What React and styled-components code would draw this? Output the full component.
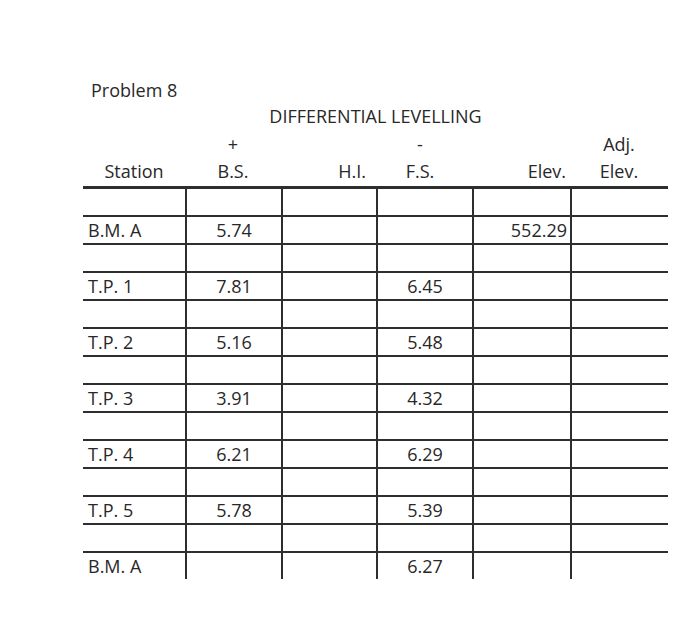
import React from 'react'
import styled, { createGlobalStyle } from 'styled-components'

const GlobalStyle = createGlobalStyle`
    html, body {
        margin: 0;
        padding: 0;
        background: #ffffff;
    }
    body {
        font-family: "Open Sans", "Liberation Sans", sans-serif;
        color: #282828;
    }
`

const COLS = '102px 96px 95px 96px 98px 98px'
const LINE = '#2e2e2e'

const headers = [
    { top: '', bottom: 'Station', align: 'center' },
    { top: '+', bottom: 'B.S.', align: 'center' },
    { top: '', bottom: 'H.I.', align: 'flex-end', pad: '0 10px 0 0' },
    { top: '-', bottom: 'F.S.', align: 'center', pad: '0 8px 0 0' },
    { top: '', bottom: 'Elev.', align: 'flex-end', pad: '0 4px 0 0' },
    { top: 'Adj.', bottom: 'Elev.', align: 'center' },
]

const data = [
    ['B.M. A', '5.74', '', '', '552.29', ''],
    ['T.P. 1', '7.81', '', '6.45', '', ''],
    ['T.P. 2', '5.16', '', '5.48', '', ''],
    ['T.P. 3', '3.91', '', '4.32', '', ''],
    ['T.P. 4', '6.21', '', '6.29', '', ''],
    ['T.P. 5', '5.78', '', '5.39', '', ''],
    ['B.M. A', '', '', '6.27', '', ''],
]

function App() {
    const rows = []
    data.forEach((r, i) => {
        rows.push({ key: 'b' + i, cells: ['', '', '', '', '', ''], first: i === 0 })
        rows.push({ key: 'd' + i, cells: r, first: false })
    })

    return (
        <Page>
            <GlobalStyle />
            <Title>Problem 8</Title>
            <Sheet>
                <Heading>DIFFERENTIAL LEVELLING</Heading>
                <HeaderRow>
                    {headers.map((h, i) => (
                        <HeaderCell key={i} $align={h.align} $pad={h.pad}>
                            <HeadTop>{h.top}</HeadTop>
                            <HeadBottom>{h.bottom}</HeadBottom>
                        </HeaderCell>
                    ))}
                </HeaderRow>
                <Body>
                    {rows.map((row) => (
                        <Row key={row.key} $first={row.first}>
                            {row.cells.map((c, j) => (
                                <Cell key={j} $col={j}>{c}</Cell>
                            ))}
                        </Row>
                    ))}
                </Body>
            </Sheet>
        </Page>
    )
}

export default App

const Page = styled.div`
    width: 692px;
    height: 636px;
    box-sizing: border-box;
    padding: 79px 0 0 83px;
`

const Title = styled.div`
    font-size: 18px;
    line-height: 22px;
    padding-left: 8px;
`

const Sheet = styled.div`
    width: 585px;
    display: flex;
    flex-direction: column;
`

const Heading = styled.div`
    text-align: center;
    font-size: 18px;
    line-height: 22px;
    margin-top: 4px;
`

const HeaderRow = styled.div`
    display: grid;
    grid-template-columns: ${COLS};
    border-bottom: 3px solid ${LINE};
    padding-bottom: 4px;
    margin-top: 6px;
`

const HeaderCell = styled.div`
    display: flex;
    flex-direction: column;
    align-items: ${(p) => p.$align};
    gap: 5px;
    padding: ${(p) => p.$pad || '0'};
    font-size: 18px;
    line-height: 22px;
`

const HeadTop = styled.div`
    height: 22px;
`

const HeadBottom = styled.div``

const Body = styled.div`
    display: flex;
    flex-direction: column;
`

const Row = styled.div`
    display: grid;
    grid-template-columns: ${COLS};
    box-sizing: border-box;
    border-top: ${(p) => (p.$first ? 'none' : `2px solid ${LINE}`)};
    height: ${(p) => (p.$first ? '26px' : '28px')};
`

const Cell = styled.div`
    display: flex;
    align-items: center;
    font-size: 18px;
    border-left: ${(p) => (p.$col === 0 ? 'none' : `2px solid ${LINE}`)};
    justify-content: ${(p) => (p.$col === 0 ? 'flex-start' : p.$col === 4 ? 'flex-end' : 'center')};
    padding: ${(p) => (p.$col === 0 ? '0 0 0 5px' : p.$col === 4 ? '0 3px 0 0' : '0')};
`
